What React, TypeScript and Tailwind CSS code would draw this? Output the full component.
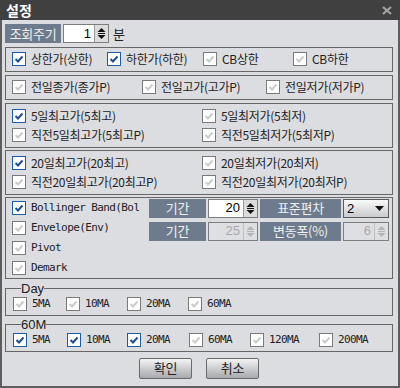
import React from 'react'

const KR = "font-['Noto_Sans_CJK_KR',sans-serif] text-[12px] tracking-[-0.3px]"
const MONO = "font-['DejaVu_Sans_Mono','Noto_Sans_CJK_KR',monospace] text-[11px] tracking-[-0.6px]"

const Box = ({ checked }: { checked?: boolean }) => (
  <span
    className={
      checked
        ? 'flex h-[14px] w-[14px] shrink-0 items-center justify-center border border-[#1c5ba6] bg-white'
        : 'flex h-[14px] w-[14px] shrink-0 items-center justify-center border border-[#7a7a7a] bg-white'
    }
  >
    <svg width="10" height="8" viewBox="0 0 10 8">
      <path d="M1.5 4 L4 6.5 L8.5 1.5" fill="none" stroke={checked ? '#1b4f96' : '#cbcbcb'} strokeWidth="2" />
    </svg>
  </span>
)

const Item = ({ label, checked, className = '', font = KR }: { label: string; checked?: boolean; className?: string; font?: string }) => (
  <div className={`flex items-center ${className}`}>
    <Box checked={checked} />
    <span className={`ml-[5px] whitespace-nowrap leading-none text-[#222] ${font}`}>{label}</span>
  </div>
)

const Arrows = ({ disabled }: { disabled?: boolean }) => (
  <svg width="9" height="13" viewBox="0 0 9 13">
    <g fill={disabled ? '#b5b5b5' : '#111'}>
      <path d="M0.5 5 L4.5 1 L8.5 5 Z" />
      <rect x="1" y="6" width="7" height="1" />
      <path d="M0.5 8 L8.5 8 L4.5 12 Z" />
    </g>
  </svg>
)

const Spin = ({ value, disabled, className = '' }: { value: string; disabled?: boolean; className?: string }) => (
  <div className={`flex h-[19px] border border-[#7d7d7d] ${className}`}>
    <div
      className={
        disabled
          ? "flex flex-1 items-center justify-end bg-[#dedfe2] pr-[3px] font-['Liberation_Sans',sans-serif] text-[13px] text-[#a8a8a8]"
          : "flex flex-1 items-center justify-end bg-white pr-[3px] font-['Liberation_Sans',sans-serif] text-[13px] text-black"
      }
    >
      {value}
    </div>
    <div className={disabled ? 'flex w-[14px] items-center justify-center border-l border-[#c0c0c0] bg-[#dedfe2]' : 'flex w-[14px] items-center justify-center border-l border-[#9a9a9a] bg-[#dcdcdc]'}>
      <Arrows disabled={disabled} />
    </div>
  </div>
)

const Label = ({ text, className = '' }: { text: string; className?: string }) => (
  <div className={`flex h-[19px] items-center justify-center bg-[#6d7b8c] text-[#f0f0f0] ${KR} text-[13px] ${className}`}>{text}</div>
)

const Group = ({ children, className = '' }: { children: React.ReactNode; className?: string }) => (
  <div className={`border border-[#666] pl-[6px] ${className}`}>{children}</div>
)

const Legend = ({ title, children }: { title: string; children: React.ReactNode }) => (
  <fieldset className="border border-[#666] pb-[4px] pl-[7px] pt-[2px]">
    <legend className="ml-[8px] px-0 font-['Liberation_Sans',sans-serif] text-[13px] leading-[13px] text-[#222]">{title}</legend>
    <div className="flex items-center">{children}</div>
  </fieldset>
)

const Button = ({ text }: { text: string }) => (
  <button className={`flex h-[21px] w-[53px] items-center justify-center rounded-[2px] border border-[#6a6a6a] bg-gradient-to-b from-[#f4f4f4] to-[#a7a9ad] text-[#222] ${KR} text-[13px]`}>
    {text}
  </button>
)

export default function App() {
  return (
    <div className="flex h-[388px] w-[400px] flex-col bg-[#dcdde1]">
      <div className="flex h-[20px] shrink-0 items-center justify-between bg-[#404040] pl-[6px] pr-[8px]">
        <span className="font-['Noto_Sans_CJK_KR',sans-serif] text-[14px] font-bold leading-none text-white">설정</span>
        <svg width="10" height="9" viewBox="0 0 10 9">
          <path d="M1 1 L9 8 M9 1 L1 8" stroke="#a3a3a3" strokeWidth="2.2" />
        </svg>
      </div>
      <div className="flex flex-1 flex-col border-x-2 border-b-2 border-[#5e5e5e] pl-[3px] pr-[5px] pt-[4px]">
        <div className="flex items-center">
          <Label text="조회주기" className="w-[56px]" />
          <Spin value="1" className="ml-[2px] w-[46px]" />
          <span className={`ml-[4px] text-[#222] ${KR} text-[13px]`}>분</span>
        </div>

        <Group className="mt-[3px] flex h-[25px] items-center">
          <Item label="상한가(상한)" checked className="w-[95px]" />
          <Item label="하한가(하한)" checked className="w-[96px]" />
          <Item label="CB상한" className="w-[90px]" />
          <Item label="CB하한" />
        </Group>

        <Group className="mt-[3px] flex h-[25px] items-center">
          <Item label="전일종가(종가P)" className="w-[130px]" />
          <Item label="전일고가(고가P)" className="w-[124px]" />
          <Item label="전일저가(저가P)" />
        </Group>

        <Group className="mt-[3px] flex h-[45px] flex-col justify-center">
          <div className="flex h-[19px] items-center">
            <Item label="5일최고가(5최고)" checked className="w-[190px]" />
            <Item label="5일최저가(5최저)" />
          </div>
          <div className="flex h-[19px] items-center">
            <Item label="직전5일최고가(5최고P)" className="w-[190px]" />
            <Item label="직전5일최저가(5최저P)" />
          </div>
        </Group>

        <Group className="mt-[2px] flex h-[45px] flex-col justify-center">
          <div className="flex h-[19px] items-center">
            <Item label="20일최고가(20최고)" checked className="w-[190px]" />
            <Item label="20일최저가(20최저)" />
          </div>
          <div className="flex h-[19px] items-center">
            <Item label="직전20일최고가(20최고P)" className="w-[190px]" />
            <Item label="직전20일최저가(20최저P)" />
          </div>
        </Group>

        <Group className="mt-[2px] flex h-[82px]">
          <div className="flex w-[137px] flex-col overflow-hidden">
            <Item label="Bollinger Band(Bol" checked className="h-[20px]" font={MONO} />
            <Item label="Envelope(Env)" className="h-[20px]" font={MONO} />
            <Item label="Pivot" className="h-[20px]" font={MONO} />
            <Item label="Demark" className="h-[20px]" font={MONO} />
          </div>
          <div className="flex flex-col gap-[4px] pt-[1px]">
            <div className="flex gap-[2px]">
              <Label text="기간" className="w-[57px]" />
              <Spin value="20" className="w-[50px]" />
              <Label text="표준편차" className="w-[81px]" />
              <div className="flex h-[19px] w-[46px] items-center justify-between border border-[#5a5a5a] bg-gradient-to-b from-[#fafafa] to-[#c9cacd] pl-[3px] pr-[4px]">
                <span className="font-['Liberation_Sans',sans-serif] text-[13px] leading-none text-black">2</span>
                <svg width="9" height="5" viewBox="0 0 9 5">
                  <path d="M0 0 L9 0 L4.5 5 Z" fill="#111" />
                </svg>
              </div>
            </div>
            <div className="flex gap-[2px]">
              <Label text="기간" className="w-[57px]" />
              <Spin value="25" disabled className="w-[50px]" />
              <Label text="변동폭(%)" className="w-[81px]" />
              <Spin value="6" disabled className="w-[46px]" />
            </div>
          </div>
        </Group>

        <div className="mt-[3px]">
          <Legend title="Day">
            <Item label="5MA" className="w-[53px]" font={MONO} />
            <Item label="10MA" className="w-[61px]" font={MONO} />
            <Item label="20MA" className="w-[61px]" font={MONO} />
            <Item label="60MA" font={MONO} />
          </Legend>
        </div>

        <div className="mt-[2px]">
          <Legend title="60M">
            <Item label="5MA" checked className="w-[54px]" font={MONO} />
            <Item label="10MA" checked className="w-[60px]" font={MONO} />
            <Item label="20MA" checked className="w-[62px]" font={MONO} />
            <Item label="60MA" className="w-[61px]" font={MONO} />
            <Item label="120MA" className="w-[69px]" font={MONO} />
            <Item label="200MA" font={MONO} />
          </Legend>
        </div>

        <div className="mt-[6px] flex justify-center gap-[14px]">
          <Button text="확인" />
          <Button text="취소" />
        </div>
      </div>
    </div>
  )
}
